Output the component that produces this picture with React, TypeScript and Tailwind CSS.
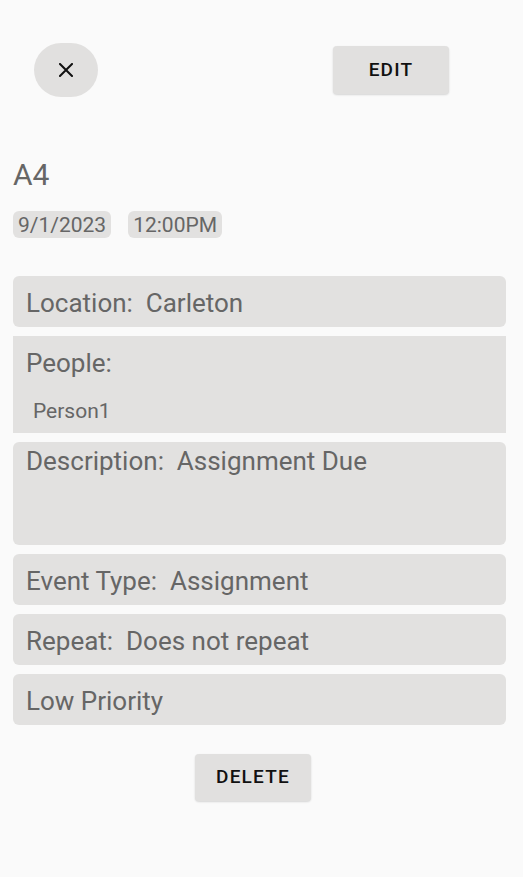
import React from "react";

const rows = [
  { label: "Event Type:", value: "Assignment" },
  { label: "Repeat:", value: "Does not repeat" },
];

const Card: React.FC<{ children: React.ReactNode }> = ({ children }) => (
  <div className="h-[51px] rounded-[6px] bg-[#e2e1e0] px-[13px] pt-[3px] flex items-center text-[26px] text-[#666666] whitespace-pre">
    {children}
  </div>
);

export default function App() {
  return (
    <div className="min-h-[877px] w-full bg-[#fafafa] font-['Roboto',sans-serif]">
      {/* Top bar */}
      <div className="flex items-center justify-between pt-[43px] pl-[34px] pr-[74px]">
        <button className="w-[64px] h-[54px] rounded-full bg-[#e1e0df] flex items-center justify-center">
          <svg width="14" height="14" viewBox="0 0 14 14">
            <path d="M1 1 L13 13 M13 1 L1 13" stroke="#111" strokeWidth="2" strokeLinecap="square" />
          </svg>
        </button>
        <button className="w-[116px] h-[48px] rounded-[4px] bg-[#e1e0df] shadow-[0_1px_2px_rgba(0,0,0,0.15)] text-[19px] font-medium tracking-[1.2px] text-[#111]">
          EDIT
        </button>
      </div>

      {/* Title + date */}
      <div className="px-[13px] pt-[60px]">
        <h1 className="text-[30px] leading-[36px] text-[#666666]">A4</h1>
        <div className="flex gap-[17px] mt-[18px]">
          <span className="h-[27px] px-[5px] pt-[2px] rounded-[6px] bg-[#e2e1e0] text-[21px] leading-[25px] text-[#666666]">9/1/2023</span>
          <span className="h-[27px] px-[5px] pt-[2px] rounded-[6px] bg-[#e2e1e0] text-[21px] leading-[25px] text-[#666666]">12:00PM</span>
        </div>
      </div>

      {/* Details */}
      <div className="pl-[13px] pr-[17px] mt-[38px] flex flex-col gap-[9px]">
        <Card>Location:  Carleton</Card>
        <div className="h-[97px] bg-[#e2e1e0] px-[13px] pt-[12px] text-[#666666]">
          <div className="text-[26px] leading-[30px]">People:</div>
          <div className="text-[21px] leading-[24px] pl-[7px] mt-[21px]">Person1</div>
        </div>
        <div className="h-[103px] rounded-[6px] bg-[#e2e1e0] px-[13px] pt-[4px] text-[26px] leading-[30px] text-[#666666] whitespace-pre">
          Description:  Assignment Due
        </div>
        {rows.map((r) => (
          <Card key={r.label}>
            {r.label}  {r.value}
          </Card>
        ))}
        <Card>Low Priority</Card>
      </div>

      <div className="flex justify-center mt-[29px] pr-[17px]">
        <button className="w-[116px] h-[47px] rounded-[4px] bg-[#e1e0df] shadow-[0_1px_2px_rgba(0,0,0,0.15)] text-[19px] font-medium tracking-[1.2px] text-[#111]">
          DELETE
        </button>
      </div>
    </div>
  );
}
